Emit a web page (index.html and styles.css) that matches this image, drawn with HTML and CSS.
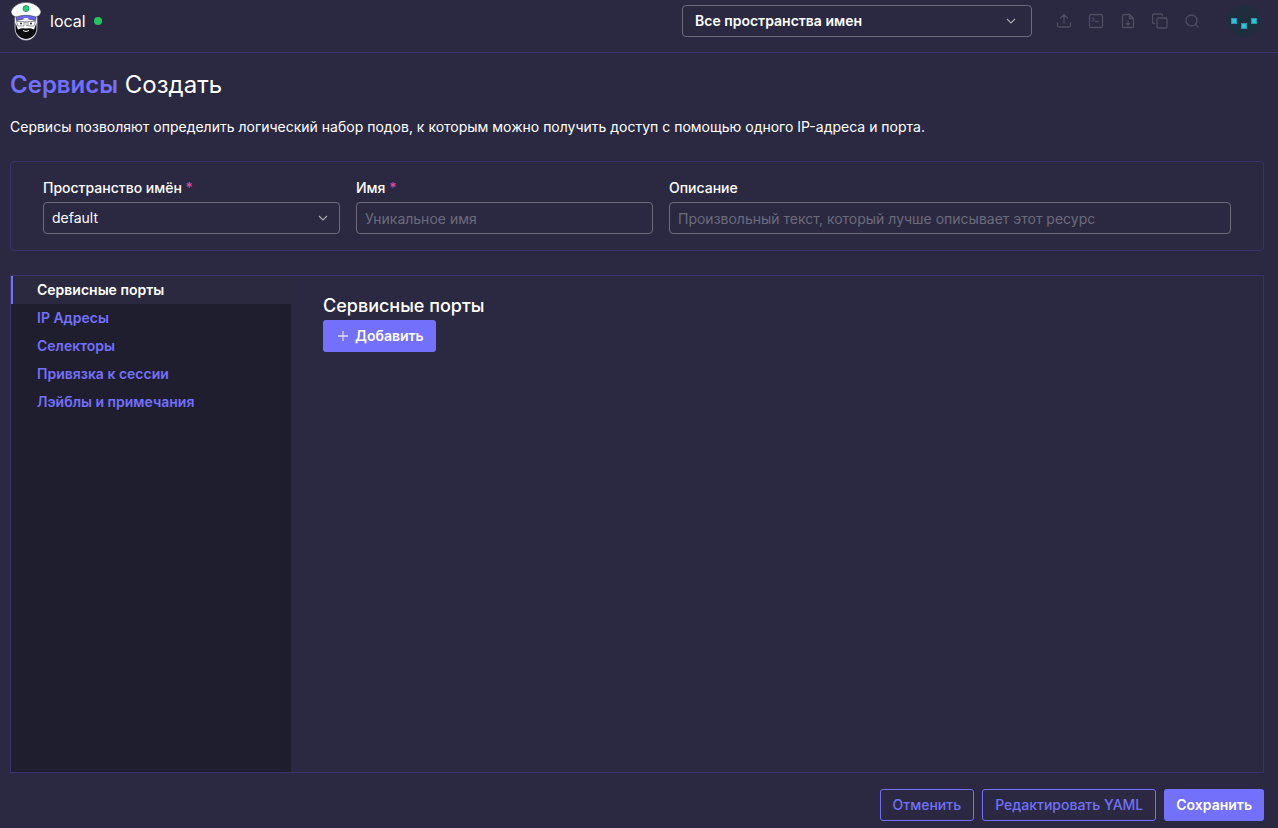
FILE: index.html
```
<!DOCTYPE html>
<html lang="ru">
<head>
    <meta charset="UTF-8">
    <meta name="viewport" content="width=device-width, initial-scale=1">
    <title>Сервисы: Создать</title>
    <link rel="stylesheet" href="styles.css">
</head>
<body>
<header class="header">
    <a class="brand" href="#">
        <svg class="brand-logo" width="32" height="40" viewBox="0 1 32 40" aria-hidden="true">
            <path d="M5 14V27C5 36 10.500 40 16 40S27 36 27 27V14z" fill="#fff" stroke="#c9c9d2" stroke-width=".8"/>
            <path d="M5.500 23L8 29.500Q12 27.500 16 28.500Q20 27.500 24 29.500L26.500 23V28C26.500 35.500 20.500 39 16 39S5.500 35.500 5.500 28z" fill="#0b0b0e"/>
            <path d="M13 30.500Q16 32.500 19 30.500" fill="none" stroke="#fff"/>
            <path d="M16 21v4.500h1.500" fill="none" stroke="#8a8a92" stroke-width=".7"/>
            <path d="M6.500 21.500h7.500v4.500H8zM18 21.500h7.500l-1.500 4.500H18zM14 22h4" fill="none" stroke="#6a6a74" stroke-width=".7"/>
            <circle cx="11" cy="23.500" r=".9" fill="#111"/>
            <circle cx="21" cy="23.500" r=".9" fill="#111"/>
            <path d="M6 16Q16 12.500 26 16L25.500 20.500L18.500 19H13.500L6.500 20.500z" fill="#6a67f0" stroke="#25253a" stroke-width=".6"/>
            <path d="M13.500 18h5l-1 3h-3z" fill="#eeeef8"/>
            <path d="M1 11.500Q2 7 9 3.500Q16 1 23 3.500Q30 7 31 11.500Q31 15.500 26 17Q16 13.500 6 17Q1 15.500 1 11.500z" fill="#fff" stroke="#15151c" stroke-width=".5"/>
            <circle cx="16" cy="8.500" r="3" fill="#18d77c" stroke="#20704c" stroke-width=".7"/>
        </svg>
        <span class="brand-name">local</span>
        <span class="brand-status"></span>
    </a>
    <div class="select select-ns">
        <select aria-label="Пространства имен">
            <option>Все пространства имен</option>
        </select>
        <svg class="chevron" width="12" height="12" viewBox="0 0 12 12" aria-hidden="true"><path d="M2 4l4 4 4-4"/></svg>
    </div>
    <div class="actions">
        <button type="button" aria-label="Импорт YAML">
            <svg width="16" height="16" viewBox="0 0 16 16"><path d="M1.500 10V12.500a1.500 1.500 0 0 0 1.500 1.500H13a1.500 1.500 0 0 0 1.500-1.500V10M8 10V2M4.500 5L8 1.500 11.500 5"/></svg>
        </button>
        <button type="button" aria-label="Терминал">
            <svg width="16" height="16" viewBox="0 0 16 16"><rect x="1.500" y="1.500" width="13" height="13" rx="1.500"/><path d="M4.500 5l1.500 1.500-1.500 1.500M7.500 8.500h2.500"/></svg>
        </button>
        <button type="button" aria-label="Скачать конфигурацию">
            <svg width="16" height="16" viewBox="0 0 16 16"><path d="M9.500 1.500H4A1.500 1.500 0 0 0 2.500 3V13A1.500 1.500 0 0 0 4 14.500H12A1.500 1.500 0 0 0 13.500 13V5.500zM9.500 1.500V5.500H13.500M8 8v4M6.500 10.500l1.500 1.500 1.500-1.500"/></svg>
        </button>
        <button type="button" aria-label="Копировать">
            <svg width="16" height="16" viewBox="0 0 16 16"><rect x="5" y="5" width="10" height="10" rx="1.500"/><path d="M2.500 10.500H2A1.500 1.500 0 0 1 .500 9V2.500A1.500 1.500 0 0 1 2 1H9a1.500 1.500 0 0 1 1.500 1.500"/></svg>
        </button>
        <button type="button" aria-label="Поиск">
            <svg width="16" height="16" viewBox="0 0 16 16"><circle cx="7.500" cy="7.500" r="5.500"/><path d="M11.500 11.500L14 14"/></svg>
        </button>
    </div>
    <button class="avatar" type="button" aria-label="Профиль">
        <svg width="32" height="32" viewBox="0 0 32 32">
            <circle cx="16" cy="16" r="16" fill="#202d3f"/>
            <g fill="#26c6da" stroke="#2497ab">
                <rect x="3.500" y="13.500" width="5" height="5"/>
                <rect x="13.500" y="18.500" width="5" height="5"/>
                <rect x="23.500" y="13.500" width="5" height="5"/>
            </g>
        </svg>
    </button>
</header>

<main class="main">
    <h1><a href="#">Сервисы</a> Создать</h1>
    <p class="description">Сервисы позволяют определить логический набор подов, к которым можно получить доступ с помощью одного IP-адреса и порта.</p>

    <form class="form">
        <div class="meta">
            <div class="field">
                <label for="namespace">Пространство имён <span class="required">*</span></label>
                <div class="select">
                    <select id="namespace">
                        <option>default</option>
                    </select>
                    <svg class="chevron" width="12" height="12" viewBox="0 0 12 12" aria-hidden="true"><path d="M2 4l4 4 4-4"/></svg>
                </div>
            </div>
            <div class="field">
                <label for="name">Имя <span class="required">*</span></label>
                <input id="name" type="text" placeholder="Уникальное имя">
            </div>
            <div class="field">
                <label for="description">Описание</label>
                <input id="description" type="text" placeholder="Произвольный текст, который лучше описывает этот ресурс">
            </div>
        </div>

        <div class="tabs">
            <ul class="tab-list">
                <li class="active"><a href="#ports">Сервисные порты</a></li>
                <li><a href="#ips">IP Адресы</a></li>
                <li><a href="#selectors">Селекторы</a></li>
                <li><a href="#session">Привязка к сессии</a></li>
                <li><a href="#labels">Лэйблы и примечания</a></li>
            </ul>
            <section class="tab-content" id="ports">
                <h2>Сервисные порты</h2>
                <button class="btn btn-primary" type="button">
                    <svg width="16" height="16" viewBox="0 0 16 16" aria-hidden="true"><path d="M8 3v10M3 8h10"/></svg>
                    Добавить
                </button>
            </section>
        </div>

        <div class="footer">
            <button class="btn" type="button">Отменить</button>
            <button class="btn" type="button">Редактировать YAML</button>
            <button class="btn btn-primary" type="submit">Сохранить</button>
        </div>
    </form>
</main>
</body>
</html>
```
FILE: styles.css
```
* {
    box-sizing: border-box;
    margin: 0;
    padding: 0;
}

body {
    display: flex;
    flex-direction: column;
    min-height: 100vh;
    background: #2a2941;
    color: #fff;
    font-family: Inter, "Liberation Sans", sans-serif;
    font-size: 14px;
    line-height: 20px;
}

a {
    color: #7370fb;
    text-decoration: none;
}

ul {
    list-style: none;
}

button, input, select {
    font: inherit;
    color: inherit;
}

button {
    cursor: pointer;
}

/* header */
.header {
    display: flex;
    align-items: center;
    padding: 0 18px 10px 10px;
    height: 53px;
    border-bottom: 1px solid #37346a;
}

.brand {
    display: flex;
    align-items: center;
    gap: 8px;
    margin-right: auto;
    color: #fff;
    font-size: 16px;
}

.brand-status {
    width: 8px;
    height: 8px;
    border-radius: 50%;
    background: #22c55e;
}

.actions {
    display: flex;
    gap: 16px;
    margin: 0 28px 0 24px;
}

.actions button, .avatar {
    display: flex;
    background: none;
    border: 0;
}

.actions svg {
    fill: none;
    stroke: #4e4d62;
    stroke-width: 1.3;
    stroke-linecap: round;
    stroke-linejoin: round;
}

/* form controls */
.select {
    display: grid;
    align-items: center;
}

.select select, .field input {
    width: 100%;
    height: 32px;
    padding: 0 8px;
    background: transparent;
    border: 1px solid #6c6b7b;
    border-radius: 4px;
    outline: none;
}

.select select {
    grid-area: 1 / 1;
    appearance: none;
}

.select option {
    background: #2a2941;
}

.chevron {
    grid-area: 1 / 1;
    justify-self: end;
    margin-right: 11px;
    fill: none;
    stroke: #a9a8b3;
    stroke-width: 1.2;
    pointer-events: none;
}

.select-ns {
    width: 350px;
}

.select-ns select {
    padding: 0 12px;
    font-weight: 600;
}

.select-ns .chevron {
    margin-right: 15px;
}

.field input::placeholder {
    color: #6c6b7b;
    opacity: 1;
}

.field label {
    display: block;
    margin-bottom: 4px;
    font-weight: 500;
}

.required {
    color: #e0489b;
}

.btn {
    display: inline-flex;
    align-items: center;
    gap: 4px;
    height: 32px;
    padding: 0 12px;
    background: transparent;
    border: 1px solid #7370fb;
    border-radius: 3px;
    color: #7370fb;
    font-weight: 500;
}

.btn-primary {
    background: #7370fb;
    border: 0;
    color: #fff;
    font-weight: 600;
}

.btn svg {
    stroke: #dcdcfe;
    stroke-width: 1.3;
}

/* page */
.main {
    display: flex;
    flex-direction: column;
    flex: 1;
    padding: 16px 14px 7px 10px;
}

h1 {
    margin-bottom: 16px;
    font-size: 24px;
    line-height: 32px;
    font-weight: 400;
}

h1 a {
    font-weight: 600;
}

.description {
    margin-bottom: 24px;
}

.form {
    display: flex;
    flex-direction: column;
    flex: 1;
}

.meta {
    display: grid;
    grid-template-columns: 297fr 297fr 562fr;
    gap: 16px;
    margin-bottom: 24px;
    padding: 16px 32px;
    border: 1px solid #37346a;
    border-radius: 4px;
}

.tabs {
    display: flex;
    flex: 1;
    border: 1px solid #37346a;
}

.tab-list {
    width: 280px;
    background: linear-gradient(to right, #1f1e2f 90%, #1e1d2c);
}

.tab-list a {
    display: block;
    padding: 4px 24px;
    border-left: 2px solid transparent;
    font-weight: 600;
}

.tab-list .active a {
    background: #2b2940;
    border-left-color: #7370fb;
    color: #fff;
}

.tab-content {
    flex: 1;
    padding: 16px 32px;
}

h2 {
    font-size: 18px;
    line-height: 28px;
    font-weight: 500;
}

.footer {
    display: flex;
    justify-content: flex-end;
    gap: 8px;
    margin-top: 16px;
}
```
